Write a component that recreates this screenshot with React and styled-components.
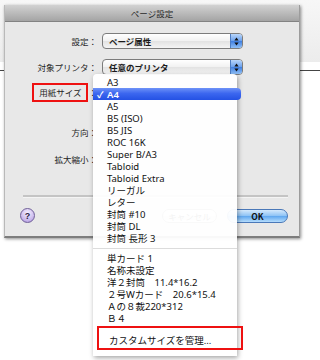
import React from "react"
import styled, { createGlobalStyle } from "styled-components"

const GlobalStyle = createGlobalStyle`
  html, body {
    margin: 0;
    padding: 0;
    background: #ffffff;
  }
  body {
    font-family: "Noto Sans", "Noto Sans CJK JP", sans-serif;
    color: #1a1a1a;
  }
`

const paperSizes = [
  "A3", "A4", "A5", "B5 (ISO)", "B5 JIS", "ROC 16K", "Super B/A3",
  "Tabloid", "Tabloid Extra", "リーガル", "レター", "封筒 #10", "封筒 DL", "封筒 長形 3",
]
const customSizes = [
  "単カード 1", "名称未設定", "洋２封筒　11.4*16.2", "２号Wカード　20.6*15.4",
  "Ａの８裁220*312", "Ｂ４",
]

const Stepper = () => (
  <StepBox>
    <svg width="5" height="9" viewBox="0 0 5 9">
      <path d="M2.5 0.5 L4.6 3.4 L0.4 3.4 Z" fill="#111" />
      <path d="M2.5 8.5 L4.6 5.6 L0.4 5.6 Z" fill="#111" />
    </svg>
  </StepBox>
)

const Popup = ({ children }) => (
  <PopupButton>
    <span>{children}</span>
    <Stepper />
  </PopupButton>
)

export default function App() {
  return (
    <>
      <GlobalStyle />
      <Page>
        <Toolbar />
        <PageLine />
        <Dialog>
          <TitleBar>ページ設定</TitleBar>
          <Body>
            <Form>
              <Row $h={16}>
                <Label>設定：</Label>
                <Popup>ページ属性</Popup>
              </Row>
              <Row $h={16} $top={10}>
                <Label>対象プリンタ：</Label>
                <Popup>任意のプリンタ</Popup>
              </Row>
              <Row $h={20} $top={7}>
                <Label>
                  <Marked>用紙サイズ</Marked>：
                </Label>
                <span />
              </Row>
              <Row $h={28} $top={16}>
                <Label>方向：</Label>
                <span />
              </Row>
              <Row $h={16} $top={5}>
                <Label>拡大縮小：</Label>
                <span />
              </Row>
            </Form>
            <Separator />
            <Buttons>
              <HelpButton>?</HelpButton>
              <Spacer />
              <PushButton>キャンセル</PushButton>
              <PushButton $default>OK</PushButton>
            </Buttons>
          </Body>
        </Dialog>

        <Menu>
          {paperSizes.map((s) => (
            <MenuItem key={s} $selected={s === "A4"}>
              <Check>{s === "A4" ? "✓" : ""}</Check>
              {s}
            </MenuItem>
          ))}
          <MenuSeparator />
          {customSizes.map((s) => (
            <MenuItem key={s}>
              <Check />
              {s}
            </MenuItem>
          ))}
          <CustomItem>
            <Check />
            カスタムサイズを管理...
          </CustomItem>
        </Menu>
      </Page>
    </>
  )
}

// Styling
const Page = styled.div`
  position: relative;
  width: 320px;
  height: 360px;
  overflow: hidden;
  background: #fff;
`

const Toolbar = styled.div`
  height: 62px;
  background: linear-gradient(#f7f7f7, #ececec);
`

const PageLine = styled.div`
  margin-top: 8px;
  height: 1px;
  background: #444;
`

const Dialog = styled.div`
  position: absolute;
  left: 4px;
  top: 5px;
  width: 294px;
  display: flex;
  flex-direction: column;
  background: #e8e8e8;
  border-left: 1px solid #b9b9b9;
  border-right: 1px solid #9c9c9c;
  border-bottom: 2px solid #7d7d7d;
  box-shadow: 1px 1px 3px rgba(0, 0, 0, 0.45);
`

const TitleBar = styled.div`
  height: 16px;
  display: flex;
  align-items: center;
  justify-content: center;
  font-family: "Noto Sans CJK JP", sans-serif;
  font-size: 8.5px;
  color: #2a2a2a;
  background: linear-gradient(#d2d2d2, #a4a4a4);
  border-bottom: 1px solid #838383;
`

const Body = styled.div`
  display: flex;
  flex-direction: column;
  padding: 11px 11px 13px 15px;
`

const Form = styled.div`
  display: flex;
  flex-direction: column;
`

const Row = styled.div`
  display: grid;
  grid-template-columns: 77px 141px;
  column-gap: 5px;
  align-items: center;
  height: ${(p) => p.$h}px;
  margin-top: ${(p) => p.$top || 0}px;
`

const Label = styled.div`
  display: flex;
  align-items: center;
  justify-content: flex-end;
  font-family: "Noto Sans CJK JP", sans-serif;
  font-size: 8.5px;
  color: #1e1e1e;
  white-space: nowrap;
`

const Marked = styled.span`
  display: inline-block;
  line-height: 11px;
  padding: 2px 5px;
  border: 2px solid #ee1111;
`

const PopupButton = styled.div`
  height: 16px;
  box-sizing: border-box;
  display: flex;
  align-items: center;
  justify-content: space-between;
  padding-left: 6px;
  border: 1px solid #7c7c7c;
  border-radius: 4px;
  overflow: hidden;
  background: linear-gradient(#ffffff, #f1f1f1 50%, #e2e2e2 51%, #f4f4f4);
  font-family: "Noto Sans CJK JP", sans-serif;
  font-weight: 700;
  font-size: 8.5px;
  color: #1a1a1a;
`

const StepBox = styled.div`
  align-self: stretch;
  width: 11px;
  display: flex;
  align-items: center;
  justify-content: center;
  border-left: 1px solid #4d7cc2;
  background: linear-gradient(#b9d6fa, #6aa0ec 50%, #3f7ee0 51%, #8fc0f7);
`

const Separator = styled.div`
  margin: 28px 0 0 3px;
  height: 2px;
  background: #c4c4c4;
  border-bottom: 1px solid #f4f4f4;
`

const Buttons = styled.div`
  display: flex;
  align-items: center;
  margin-top: 10px;
  height: 15px;
  gap: 10px;
`

const Spacer = styled.div`
  flex: 1;
`

const HelpButton = styled.div`
  width: 13px;
  height: 13px;
  border-radius: 50%;
  display: flex;
  align-items: center;
  justify-content: center;
  border: 1px solid #6f5f98;
  background: radial-gradient(circle at 50% 30%, #f6f0ff, #c5b2ea 70%, #9e85d0);
  font-family: "Liberation Sans", sans-serif;
  font-weight: 700;
  font-size: 9px;
  color: #2a2244;
`

const PushButton = styled.div`
  height: 14px;
  width: ${(p) => (p.$default ? 61 : 55)}px;
  box-sizing: border-box;
  display: flex;
  align-items: center;
  justify-content: center;
  border-radius: 7px;
  font-family: "Noto Sans CJK JP", sans-serif;
  font-weight: ${(p) => (p.$default ? 700 : 400)};
  font-size: 8.5px;
  color: #111;
  border: 1px solid ${(p) => (p.$default ? "#4a78b8" : "#8a8a8a")};
  background: ${(p) =>
    p.$default
      ? "linear-gradient(#d4e9fc, #8cc2f5 50%, #5ea6ef 51%, #b4dcfc)"
      : "linear-gradient(#ffffff, #f0f0f0 50%, #e0e0e0 51%, #f6f6f6)"};
`

const Menu = styled.div`
  position: absolute;
  left: 93px;
  top: 74px;
  width: 144px;
  padding: 2px 0 6px;
  display: flex;
  flex-direction: column;
  background: rgba(255, 255, 255, 0.95);
  border-radius: 4px 4px 0 0;
  box-shadow: 1px 2px 5px rgba(0, 0, 0, 0.35);
  font-family: "Noto Sans", "Noto Sans CJK JP", sans-serif;
  font-size: 9.5px;
`

const MenuItem = styled.div`
  height: 12px;
  display: flex;
  align-items: center;
  white-space: pre;
  color: ${(p) => (p.$selected ? "#fff" : "#111")};
  background: ${(p) =>
    p.$selected ? "linear-gradient(#6e92f7, #3c67ef 45%, #2451e4)" : "transparent"};
  margin-right: ${(p) => (p.$selected ? -4 : 0)}px;
  border-radius: ${(p) => (p.$selected ? "0 4px 4px 0" : "0")};
  font-weight: ${(p) => (p.$selected ? 600 : 400)};
`

const Check = styled.span`
  width: 14px;
  flex: none;
  padding-left: 4px;
  box-sizing: border-box;
  font-size: 9px;
`

const MenuSeparator = styled.div`
  height: 1px;
  margin: 4px 0 3px;
  background: #dcdcdc;
`

const CustomItem = styled.div`
  margin: 2px -6px 0 4px;
  height: 24px;
  box-sizing: border-box;
  display: flex;
  align-items: center;
  padding-top: 3px;
  border: 2px solid #ee1111;
  color: #111;
  white-space: pre;

  & > span {
    width: 10px;
  }
`
